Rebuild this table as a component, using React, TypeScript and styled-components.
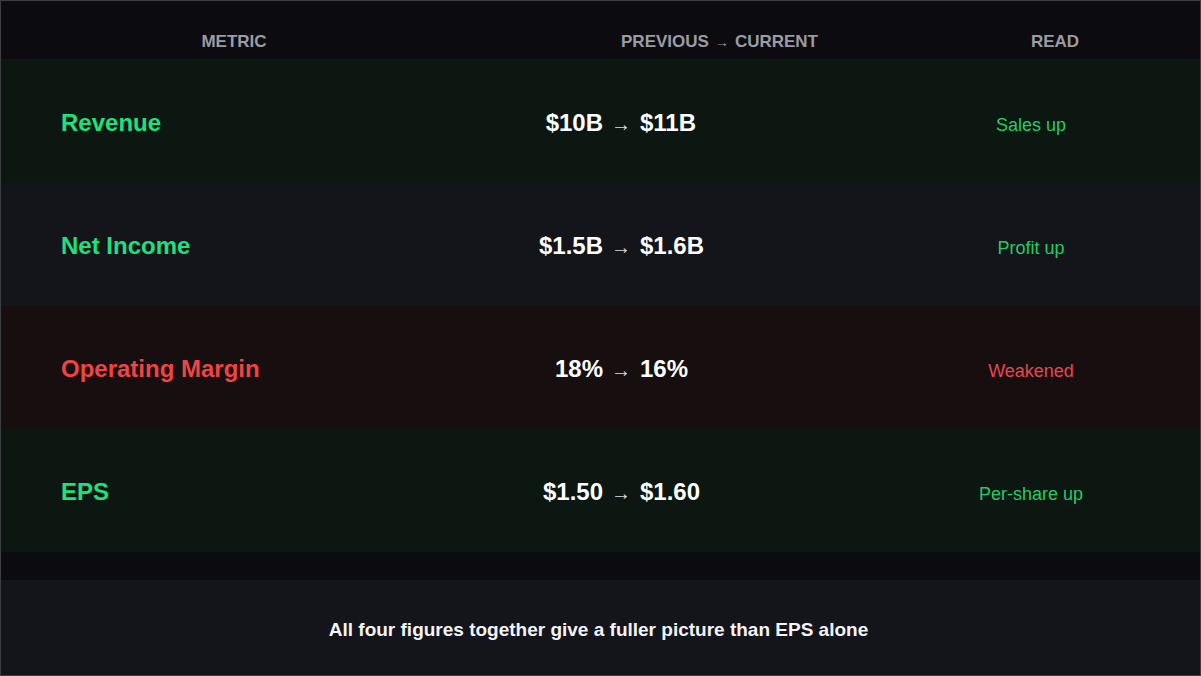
import styled, { createGlobalStyle } from "styled-components";

const GlobalStyle = createGlobalStyle`
  html, body {
    margin: 0;
    padding: 0;
    background: #0b0b10;
  }
  body {
    font-family: "Liberation Sans", Arial, sans-serif;
  }
`;

const Frame = styled.div`
  width: 1201px;
  height: 676px;
  box-sizing: border-box;
  border: 1px solid #3d3d44;
  background: #0b0b10;
  display: flex;
  flex-direction: column;
`;

const HeaderRow = styled.div`
  height: 59px;
  display: grid;
  grid-template-columns: 466px 505px 166px;
  padding-top: 31px;
  box-sizing: border-box;
  border-bottom: 1px dotted #15201a;
`;

const HeaderCell = styled.div`
  text-align: center;
  color: #9b9ca4;
  font-size: 17px;
  font-weight: 700;
  line-height: 20px;
`;

const HeaderArrow = styled.span`
  font-size: 14px;
  font-weight: 400;
  margin: 0 6px;
`;

type Tone = "good" | "neutral" | "bad";

const rowBg: Record<Tone, string> = {
  good: "#0c1712",
  neutral: "#14151b",
  bad: "#170e10",
};

const Row = styled.div<{ $bg: Tone }>`
  height: 123px;
  display: grid;
  grid-template-columns: 259px 602px 218px;
  padding: 4px 60px 0;
  box-sizing: border-box;
  align-content: center;
  align-items: baseline;
  background: ${(p) => rowBg[p.$bg]};
`;

const Label = styled.div<{ $bad?: boolean }>`
  font-size: 24px;
  font-weight: 700;
  line-height: 28px;
  color: ${(p) => (p.$bad ? "#ef4444" : "#1ee07e")};
`;

const Change = styled.div`
  display: grid;
  grid-template-columns: 1fr auto 1fr;
  column-gap: 8px;
  align-items: baseline;
  color: #ffffff;
  font-size: 24px;
  font-weight: 700;
  line-height: 28px;
`;

const Prev = styled.span`
  text-align: right;
`;

const Arrow = styled.span`
  font-size: 20px;
  font-weight: 400;
  color: #dcdce0;
`;

const Curr = styled.span`
  text-align: left;
  padding-left: 1px;
`;

const Read = styled.div<{ $bad?: boolean }>`
  text-align: center;
  font-size: 18px;
  line-height: 22px;
  color: ${(p) => (p.$bad ? "#e5484d" : "#22cc66")};
`;

const Spacer = styled.div`
  height: 28px;
`;

const Footer = styled.div`
  flex: 1;
  background: #14151b;
  display: flex;
  align-items: center;
  justify-content: center;
  color: #f4f4f6;
  font-size: 19px;
  font-weight: 700;
  padding: 4px 4px 0 0;
`;

const rows: { name: string; prev: string; curr: string; read: string; tone: Tone; bad?: boolean }[] = [
  { name: "Revenue", prev: "$10B", curr: "$11B", read: "Sales up", tone: "good" },
  { name: "Net Income", prev: "$1.5B", curr: "$1.6B", read: "Profit up", tone: "neutral" },
  { name: "Operating Margin", prev: "18%", curr: "16%", read: "Weakened", tone: "bad", bad: true },
  { name: "EPS", prev: "$1.50", curr: "$1.60", read: "Per-share up", tone: "good" },
];

export default function App() {
  return (
    <>
      <GlobalStyle />
      <Frame>
        <HeaderRow>
          <HeaderCell>METRIC</HeaderCell>
          <HeaderCell>
            PREVIOUS<HeaderArrow>→</HeaderArrow>CURRENT
          </HeaderCell>
          <HeaderCell>READ</HeaderCell>
        </HeaderRow>
        {rows.map((r) => (
          <Row key={r.name} $bg={r.tone}>
            <Label $bad={r.bad}>{r.name}</Label>
            <Change>
              <Prev>{r.prev}</Prev>
              <Arrow>→</Arrow>
              <Curr>{r.curr}</Curr>
            </Change>
            <Read $bad={r.bad}>{r.read}</Read>
          </Row>
        ))}
        <Spacer />
        <Footer>All four figures together give a fuller picture than EPS alone</Footer>
      </Frame>
    </>
  );
}
